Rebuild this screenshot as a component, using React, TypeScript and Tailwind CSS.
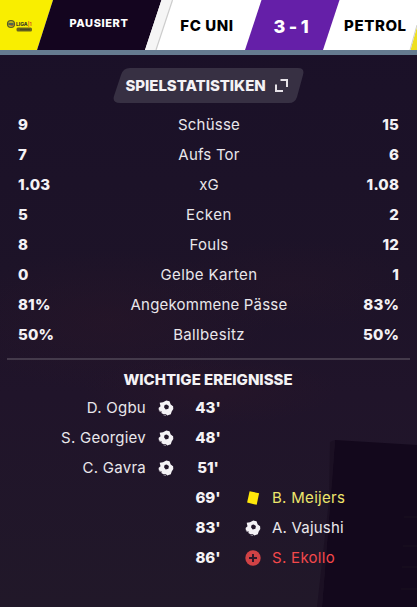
import React from "react";

const stats: [string, string, string, string][] = [
  ["9", "Schüsse", "15", "tracking-[0.2px]"],
  ["7", "Aufs Tor", "6", "tracking-[0.2px]"],
  ["1.03", "xG", "1.08", "tracking-[0px]"],
  ["5", "Ecken", "2", "tracking-[0.55px]"],
  ["8", "Fouls", "12", "tracking-[0.25px]"],
  ["0", "Gelbe Karten", "1", "tracking-[0.37px]"],
  ["81%", "Angekommene Pässe", "83%", "tracking-[0.2px]"],
  ["50%", "Ballbesitz", "50%", "tracking-[0.35px]"],
];

type Kind = "goal" | "card" | "injury";
const events: { min: string; name: string; kind: Kind; home: boolean; color: string }[] = [
  { min: "43'", name: "D. Ogbu", kind: "goal", home: true, color: "text-[#e9e7eb] tracking-[0.25px]" },
  { min: "48'", name: "S. Georgiev", kind: "goal", home: true, color: "text-[#e9e7eb] tracking-[0.25px]" },
  { min: "51'", name: "C. Gavra", kind: "goal", home: true, color: "text-[#e9e7eb] tracking-[0.25px]" },
  { min: "69'", name: "B. Meijers", kind: "card", home: false, color: "text-[#eee66c] tracking-[0.3px]" },
  { min: "83'", name: "A. Vajushi", kind: "goal", home: false, color: "text-[#e9e7eb] tracking-[0.2px]" },
  { min: "86'", name: "S. Ekollo", kind: "injury", home: false, color: "text-[#f4484b] tracking-[0.3px]" },
];

function EventIcon({ kind }: { kind: Kind }) {
  if (kind === "card")
    return (
      <svg className="h-4 w-4 shrink-0" viewBox="0 0 16 16">
        <path d="M4.600 1.200 14.100 3.200 11.700 14.800 2.100 12.500Z" fill="#ffe80a" />
      </svg>
    );
  if (kind === "injury")
    return (
      <svg className="h-4 w-4 shrink-0" viewBox="0 0 16 16">
        <circle cx="8" cy="8" r="7.700" fill="#d04245" />
        <path d="M8 4v8M4 8h8" stroke="#2c1829" strokeWidth="2" />
      </svg>
    );
  return (
    <svg className="h-4 w-4 shrink-0" viewBox="0 0 16 16">
      <path
        d="M1.700 2.800 5 2.300 8.300.6 11.500 1.300 12.700 4.500 15.100 6.300 15.300 9 13.700 11.500 12.800 14.200 9.200 15.400 8 14.200 4.500 14 3.400 11.200.9 10.400.6 8 2.500 6.200Z"
        fill="#f4f2f5"
      />
      <path d="M8.600 4.500 10.900 6 10.400 8.700 7.700 9.400 6 7.300 6.700 5Z" fill="#211629" />
      <path d="M1.300 11.300 3 11.600 4 13.500M5.500 15 8 15.500" stroke="#a9a3ad" strokeWidth=".8" fill="none" />
    </svg>
  );
}

function Header() {
  return (
    <header className="relative h-[55px] shrink-0 overflow-hidden bg-[#657b90]">
      <svg className="absolute left-0 top-0" width="417" height="50" viewBox="0 0 417 50">
        <rect width="417" height="50" fill="#fff" />
        <path d="M0 0H53L37 50H0Z" fill="#f9ee00" />
        <path d="M53 0H161.500L145 50H37Z" fill="#14051f" />
        <path d="M161.500 0H172.500L156 50H145Z" fill="#f5f5f5" />
        <path d="M172.500 0 156 50" stroke="#ccc" strokeWidth="1.200" />
        <path d="M261.500 0H339.500L323 50H245Z" fill="#651fa8" />
        <path d="M417 27 410.500 50H417Z" fill="#eedf20" />
        <path d="M417 25 410 50" stroke="#d0d0ca" strokeWidth="1" />
        <circle cx="11" cy="24" r="3.500" fill="#bab41c" stroke="#555b27" strokeWidth="1.200" />
        <path d="M8.500 24h5" stroke="#314b60" strokeWidth="1.500" />
        <path d="M10.500 25.500h3" stroke="#b76425" strokeWidth="1" />
        <rect x="16.500" y="27.500" width="15.500" height="4" rx="1.500" fill="#69651c" />
        <path d="M20 29.500h10" stroke="#4c4a20" strokeWidth="1.500" />
      </svg>
      <div className="relative flex h-[50px] items-center whitespace-nowrap font-bold">
        <div className="flex w-[53px] pl-4">
          <span className="-mt-[3px] text-[5px] font-extrabold leading-[6px] text-[#3c4022]">LIGA</span>
          <span className="-mt-[3px] text-[5px] leading-[6px] text-[#d7581c]">|1</span>
        </div>
        <div className="w-[92px] pb-[4px] text-center text-[11px] font-extrabold tracking-[0.6px] text-white">PAUSIERT</div>
        <div className="w-[124px] pt-[3px] text-center text-[15px] font-extrabold tracking-[0.6px] text-black">FC UNI</div>
        <div className="w-[46px] pr-0.5 pt-[3px] text-center text-[18px] font-extrabold tracking-[-0.2px] text-white">3 - 1</div>
        <div className="w-[102px] pl-[29px] pt-[3px] text-[15px] font-extrabold tracking-[0.6px] text-black">PETROL</div>
      </div>
    </header>
  );
}

function Backdrop() {
  return (
    <svg className="absolute inset-0" width="417" height="607" viewBox="0 0 417 607">
      <defs>
        <linearGradient id="night" x1="0" y1="0" x2="0" y2="1">
          <stop offset="0" stopColor="#1a1028" />
          <stop offset=".45" stopColor="#1d1328" />
          <stop offset=".65" stopColor="#20142a" />
          <stop offset="1" stopColor="#211829" />
        </linearGradient>
        <radialGradient id="warm">
          <stop offset="0" stopColor="#2c1727" stopOpacity=".4" />
          <stop offset="1" stopColor="#2c1727" stopOpacity="0" />
        </radialGradient>
      </defs>
      <rect width="417" height="607" fill="url(#night)" />
      <ellipse cx="110" cy="320" rx="160" ry="70" fill="url(#warm)" />
      <ellipse cx="290" cy="285" rx="130" ry="45" fill="url(#warm)" opacity=".6" />
      <ellipse cx="210" cy="390" rx="130" ry="35" fill="url(#warm)" />
      <path d="M335 440 417 445V607H322Z" fill="#13081c" />
      <path d="M335 440 333 470 322 607H317L329 500 330 442Z" fill="#1b1023" />
      <path d="M404 517h13M403 546h14M402 567h15M401 589h16" stroke="#1a101f" />
    </svg>
  );
}

export default function App() {
  return (
    <main className="relative h-[607px] w-[417px] overflow-hidden bg-[#1b1128] font-['Inter',sans-serif] text-[#f4f2f5]">
      <Backdrop />
      <div className="relative flex h-full flex-col">
        <Header />
        <div className="flex h-[55px] shrink-0 justify-center pt-[13px]">
          <button className="relative flex h-[35px] w-[192px] items-center whitespace-nowrap pl-[13px] text-[15px] font-extrabold">
            <svg className="absolute inset-0" width="192" height="35" viewBox="0 0 192 35">
              <path d="M17 0H185Q192 0 190 7L184 29Q182 35 176 35H7Q-1 35 1 28L8 7Q10 0 17 0Z" fill="#373043" />
            </svg>
            <span className="relative pt-px tracking-[-0.05px]">SPIELSTATISTIKEN</span>
            <svg className="absolute left-[162px] top-[11px]" width="14" height="14" viewBox="0 0 14 14" fill="none" stroke="#e6e2e8" strokeWidth="2">
              <path d="M5.500 1H12v7M1 5.500V12h7" />
            </svg>
          </button>
        </div>
        <section className="flex flex-col px-[18px] text-[15px]">
          {stats.map(([home, label, away, tracking]) => (
            <div key={label} className="grid h-[30px] grid-cols-[60px_1fr_60px] items-center whitespace-nowrap">
              <b className="font-extrabold tracking-[0.15px]">{home}</b>
              <span className={`pl-px text-center text-[#e9e7eb] ${tracking}`}>{label}</span>
              <b className="text-right font-extrabold tracking-[0.15px]">{away}</b>
            </div>
          ))}
        </section>
        <div className="mx-[7px] mt-2 h-0.5 shrink-0 bg-[#443a4b]" />
        <h2 className="flex h-[33px] shrink-0 items-center justify-center pr-px pt-[7px] text-[15px] font-extrabold tracking-[0px]">
          WICHTIGE EREIGNISSE
        </h2>
        <section className="text-[15px]">
          {events.map((event) => (
            <div key={event.min} className="grid h-[30px] grid-cols-[174px_68px_1fr] items-center whitespace-nowrap">
              <div className="flex items-center justify-end gap-3">
                {event.home && <><span className={event.color}>{event.name}</span><EventIcon kind={event.kind} /></>}
              </div>
              <b className="text-center font-extrabold">{event.min}</b>
              <div className="flex items-center gap-[11px] pl-[3px]">
                {!event.home && <><EventIcon kind={event.kind} /><span className={event.color}>{event.name}</span></>}
              </div>
            </div>
          ))}
        </section>
      </div>
    </main>
  );
}
